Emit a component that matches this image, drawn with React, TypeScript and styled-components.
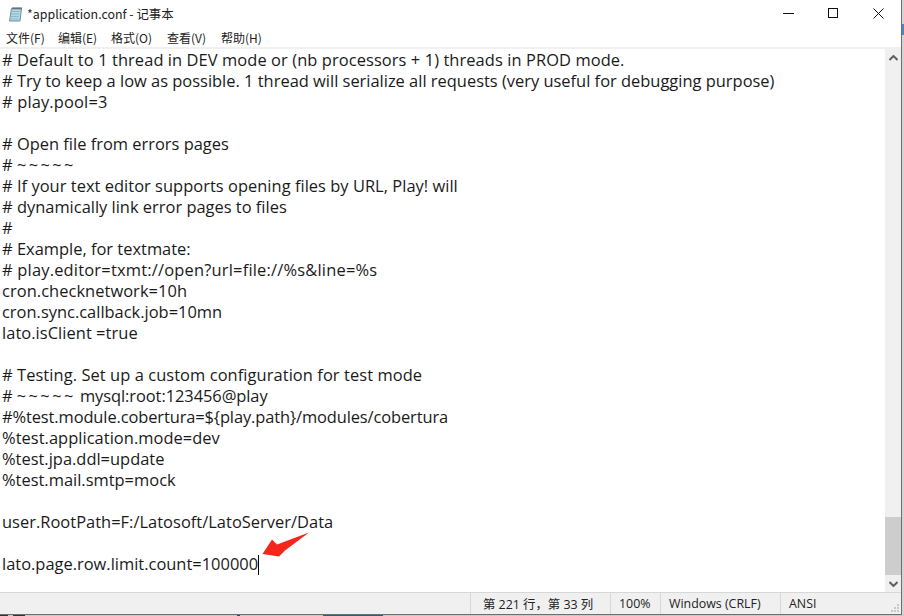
import React from "react";
import styled, { createGlobalStyle } from "styled-components";

const Global = createGlobalStyle`
  html, body { margin: 0; padding: 0; background: #fff; }
  body { width: 904px; height: 616px; overflow: hidden; }
`;

const Screen = styled.div`
  width: 904px;
  height: 616px;
  display: flex;
  flex-direction: column;
  overflow: hidden;
  background: #cfcfcf;
`;

const Upper = styled.div`
  flex: 1;
  min-height: 0;
  display: flex;
`;

const Window = styled.div`
  position: relative;
  flex: 1;
  min-width: 0;
  display: flex;
  flex-direction: column;
  background: #fff;
  border-right: 1px solid #6e6e6e;
  border-bottom: 1px solid #6e6e6e;
  font-family: "Noto Sans CJK SC", "Noto Sans", sans-serif;
`;

const RightStrip = styled.div`
  width: 2px;
  flex: none;
  padding-top: 24px;
  background: #d4d4d4;
`;

const BlueTab = styled.div`
  height: 11px;
  background: #4a86c8;
`;

const BottomStrip = styled.div`
  height: 1px;
  flex: none;
  display: flex;
  background: #c9c9c9;
`;

const StripBit = styled.div<{ $w: number; $c: string }>`
  width: ${(p) => p.$w}px;
  background: ${(p) => p.$c};
`;

const TitleBar = styled.div`
  height: 27px;
  display: flex;
  align-items: center;
  padding-left: 8px;
  gap: 3px;
  flex: none;
`;

const TitleText = styled.span`
  font-size: 12.4px;
  color: #222;
`;

const Controls = styled.div`
  margin-left: auto;
  display: flex;
  align-items: center;
`;

const ControlButton = styled.div`
  width: 45px;
  height: 27px;
  display: flex;
  align-items: center;
  justify-content: center;
`;

const MenuBar = styled.div`
  height: 20px;
  display: flex;
  align-items: center;
  padding-left: 6px;
  flex: none;
  border-bottom: 2px solid #f0f0f0;
`;

const MenuItem = styled.span<{ $w: number }>`
  width: ${(p) => p.$w}px;
  font-size: 12px;
  color: #222;
`;

const Middle = styled.div`
  flex: 1;
  display: flex;
  min-height: 0;
`;

const Editor = styled.div`
  flex: 1;
  padding: 0 0 0 2px;
  overflow: hidden;
`;

const Line = styled.div<{ $track?: number }>`
  height: 21px;
  line-height: 21px;
  font-family: "Open Sans", "Noto Sans", sans-serif;
  font-size: 16.45px;
  letter-spacing: ${(p) => p.$track ?? 0}px;
  color: #1a1a1a;
  white-space: pre;
`;

const Tilde = styled.span`
  letter-spacing: 2.4px;
`;

const Caret = styled.span`
  display: inline-block;
  width: 1px;
  height: 20px;
  background: #000;
  vertical-align: -5px;
`;

const ScrollBar = styled.div`
  width: 16px;
  flex: none;
  background: #f0f0f0;
  display: flex;
  flex-direction: column;
`;

const ScrollArrow = styled.div`
  height: 17px;
  flex: none;
  display: flex;
  align-items: center;
  justify-content: center;
`;

const ScrollTrack = styled.div`
  flex: 1;
  display: flex;
  flex-direction: column;
  justify-content: flex-end;
`;

const ScrollThumb = styled.div`
  height: 58px;
  background: #cdcdcd;
`;

const StatusBar = styled.div`
  position: relative;
  height: 22px;
  flex: none;
  display: flex;
  align-items: center;
  background: #f0f0f0;
  border-top: 1px solid #d7d7d7;
  box-sizing: border-box;
`;

const StatusCell = styled.div<{ $w: number; $pad?: number }>`
  width: ${(p) => p.$w}px;
  height: 100%;
  box-sizing: border-box;
  border-left: 1px solid #d7d7d7;
  display: flex;
  align-items: center;
  padding-left: ${(p) => p.$pad ?? 8}px;
  font-size: 12.4px;
  color: #222;
  white-space: pre;
  font-family: "Open Sans", "Noto Sans CJK SC", sans-serif;
`;

const StatusSpacer = styled.div`
  width: 470px;
  flex: none;
`;

const Grip = styled.svg`
  position: absolute;
  right: 1px;
  bottom: 1px;
`;

const ArrowMark = styled.svg`
  position: absolute;
  left: 258px;
  top: 530px;
`;

const lines: [string, number?][] = [
  ["# Default to 1 thread in DEV mode or (nb processors + 1) threads in PROD mode.", 0.08],
  ["# Try to keep a low as possible. 1 thread will serialize all requests (very useful for debugging purpose)"],
  ["# play.pool=3", 0.15],
  [""],
  ["# Open file from errors pages"],
  ["# ~~~~~"],
  ["# If your text editor supports opening files by URL, Play! will", 0.03],
  ["# dynamically link error pages to files"],
  ["#"],
  ["# Example, for textmate:"],
  ["# play.editor=txmt://open?url=file://%s&line=%s", 0.2],
  ["cron.checknetwork=10h", 0.05],
  ["cron.sync.callback.job=10mn"],
  ["lato.isClient =true", 0.05],
  [""],
  ["# Testing. Set up a custom configuration for test mode", 0.07],
  ["# ~~~~~ mysql:root:123456@play", -0.07],
  ["#%test.module.cobertura=${play.path}/modules/cobertura", -0.11],
  ["%test.application.mode=dev", 0.04],
  ["%test.jpa.ddl=update"],
  ["%test.mail.smtp=mock"],
  [""],
  ["user.RootPath=F:/Latosoft/LatoServer/Data", 0.02],
  [""],
];

const menus: [string, number][] = [
  ["文件(F)", 52],
  ["编辑(E)", 53],
  ["格式(O)", 56],
  ["查看(V)", 54],
  ["帮助(H)", 50],
];

const stripBits: [number, string][] = [
  [8, "#333"],
  [5, "#c9c9c9"],
  [12, "#333"],
  [212, "#c9c9c9"],
  [3, "#2a4a70"],
  [83, "#c9c9c9"],
  [60, "#2d5a94"],
];

const renderText = (text: string) =>
  text.split(/(~+)/).map((part, i) =>
    part.startsWith("~") ? <Tilde key={i}>{part}</Tilde> : <React.Fragment key={i}>{part}</React.Fragment>
  );

export default function App() {
  return (
    <Screen>
      <Global />
      <Upper>
        <Window>
          <TitleBar>
            <svg width="16" height="16" viewBox="0 0 16 16">
              <path d="M3.5 2.5h10l-1.5 12.5H1.5z" fill="#b5d8e4" stroke="#6f8f9c" />
              <path d="M3.5 5.5h8M3 8h8M2.8 10.5h8M2.5 13h8" stroke="#8fb6c4" />
              <path d="M5 1v2.5M7 1v2.5M9 1v2.5M11 1v2.5M13 1v2.5" stroke="#555" />
            </svg>
            <TitleText>*application.conf - 记事本</TitleText>
            <Controls>
              <ControlButton>
                <svg width="11" height="11"><path d="M0 5.5h11" stroke="#111" /></svg>
              </ControlButton>
              <ControlButton>
                <svg width="11" height="11"><rect x="0.5" y="0.5" width="9" height="9" fill="none" stroke="#111" /></svg>
              </ControlButton>
              <ControlButton>
                <svg width="11" height="11"><path d="M0.5 0.5l10 10M10.5 0.5l-10 10" stroke="#111" /></svg>
              </ControlButton>
            </Controls>
          </TitleBar>
          <MenuBar>
            {menus.map(([m, w]) => (
              <MenuItem key={m} $w={w}>{m}</MenuItem>
            ))}
          </MenuBar>
          <Middle>
            <Editor>
              {lines.map(([l, t], i) => (
                <Line key={i} $track={t}>{renderText(l)}</Line>
              ))}
              <Line>lato.page.row.limit.count=100000<Caret /></Line>
            </Editor>
            <ScrollBar>
              <ScrollArrow>
                <svg width="9" height="6"><path d="M0.5 5L4.5 1l4 4" fill="none" stroke="#606060" strokeWidth="2" /></svg>
              </ScrollArrow>
              <ScrollTrack>
                <ScrollThumb />
              </ScrollTrack>
              <ScrollArrow>
                <svg width="9" height="6"><path d="M0.5 1L4.5 5l4-4" fill="none" stroke="#606060" strokeWidth="2" /></svg>
              </ScrollArrow>
            </ScrollBar>
          </Middle>
          <StatusBar>
            <StatusSpacer />
            <StatusCell $w={140} $pad={12}>第 221 行，第 33 列</StatusCell>
            <StatusCell $w={50}>100%</StatusCell>
            <StatusCell $w={120}>Windows (CRLF)</StatusCell>
            <StatusCell $w={100}>ANSI</StatusCell>
            <Grip width="10" height="10" viewBox="0 0 10 10">
              <path d="M7 1h2v2H7zM4 4h2v2H4zM7 4h2v2H7zM1 7h2v2H1zM4 7h2v2H4zM7 7h2v2H7z" fill="#c8c8c8" />
            </Grip>
          </StatusBar>
          <ArrowMark width="56" height="30" viewBox="0 0 56 30">
            <path d="M4.5 24L14 9.5l5 5L51 2.5 27 20.5l-6 6z" fill="#f5261b" />
          </ArrowMark>
        </Window>
        <RightStrip>
          <BlueTab />
        </RightStrip>
      </Upper>
      <BottomStrip>
        {stripBits.map(([w, c], i) => (
          <StripBit key={i} $w={w} $c={c} />
        ))}
      </BottomStrip>
    </Screen>
  );
}
